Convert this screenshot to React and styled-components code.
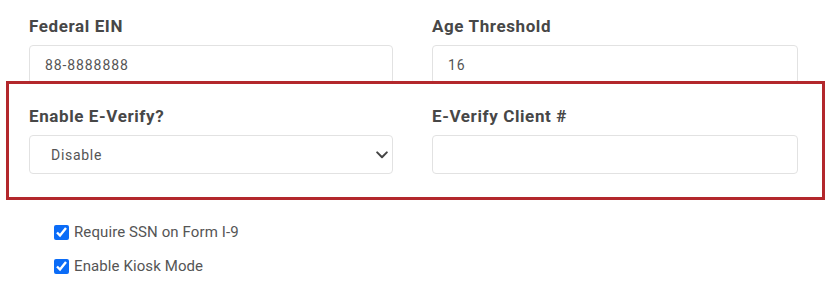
import React from "react";
import styled, { createGlobalStyle } from "styled-components";

const Global = createGlobalStyle`
  html, body { margin: 0; padding: 0; background: #ffffff; }
  body { font-family: Roboto, "Noto Sans", "Liberation Sans", sans-serif; }
  * { box-sizing: border-box; }
`;

const Page = styled.div`
  width: 831px;
  height: 290px;
  padding: 14px 0 0 29px;
  overflow: hidden;
`;

const Row = styled.div`
  position: relative;
  width: 769px;
  display: grid;
  grid-template-columns: 364px 366px;
  column-gap: 39px;
  margin-bottom: 20px;
`;

const Highlight = styled.div`
  position: absolute;
  top: -23px;
  left: -23px;
  right: -27px;
  bottom: -26px;
  border: 3px solid #b3282c;
  pointer-events: none;
`;

const Field = styled.div`
  display: flex;
  flex-direction: column;
`;

const Label = styled.label`
  font-size: 17px;
  line-height: 24px;
  font-weight: 700;
  color: #474747;
  margin-bottom: 7px;
  letter-spacing: 0.6px;
`;

const TextInput = styled.input`
  height: 39px;
  width: 100%;
  border: 1px solid #e2e2e2;
  border-radius: 4px;
  padding: 0 15px;
  font-family: inherit;
  font-size: 14px;
  letter-spacing: 0.9px;
  color: #555555;
  background: #fff;
  outline: none;
`;

const SelectWrap = styled.div`
  position: relative;
  height: 39px;
`;

const Select = styled.select`
  appearance: none;
  -webkit-appearance: none;
  height: 39px;
  width: 100%;
  border: 1px solid #e2e2e2;
  border-radius: 4px;
  padding: 0 30px 0 21px;
  font-family: inherit;
  font-size: 14px;
  letter-spacing: 0.7px;
  color: #555555;
  background: #fff;
  outline: none;
`;

const Chevron = styled.svg`
  position: absolute;
  right: 5px;
  top: 50%;
  width: 12px;
  height: 8px;
  margin-top: -4px;
  pointer-events: none;
`;

const Checks = styled.div`
  display: flex;
  flex-direction: column;
  gap: 14px;
  margin: 48px 0 0 25px;
`;

const CheckRow = styled.label`
  display: flex;
  align-items: center;
  height: 20px;
  gap: 5px;
  font-size: 15px;
  line-height: 20px;
  color: #555555;
  letter-spacing: 0.1px;
`;

const Box = styled.input`
  width: 15px;
  height: 15px;
  margin: 0;
  accent-color: #0b6cf7;
`;

export default function App() {
  return (
    <>
      <Global />
      <Page>
        <Row>
          <Field>
            <Label>Federal EIN</Label>
            <TextInput defaultValue="88-8888888" />
          </Field>
          <Field>
            <Label>Age Threshold</Label>
            <TextInput defaultValue="16" />
          </Field>
        </Row>
        <Row>
          <Field>
            <Label>Enable E-Verify?</Label>
            <SelectWrap>
              <Select defaultValue="0">
                <option value="0">Disable</option>
                <option value="1">Enable</option>
              </Select>
              <Chevron viewBox="0 0 12 8">
                <path d="M1.2 1.4 L6 6.2 L10.8 1.4" fill="none" stroke="#444" strokeWidth="2" strokeLinecap="round" strokeLinejoin="round" />
              </Chevron>
            </SelectWrap>
          </Field>
          <Field>
            <Label>E-Verify Client #</Label>
            <TextInput defaultValue="" />
          </Field>
          <Highlight />
        </Row>
        <Checks>
          <CheckRow>
            <Box type="checkbox" defaultChecked />
            Require SSN on Form I-9
          </CheckRow>
          <CheckRow>
            <Box type="checkbox" defaultChecked />
            Enable Kiosk Mode
          </CheckRow>
        </Checks>
      </Page>
    </>
  );
}
